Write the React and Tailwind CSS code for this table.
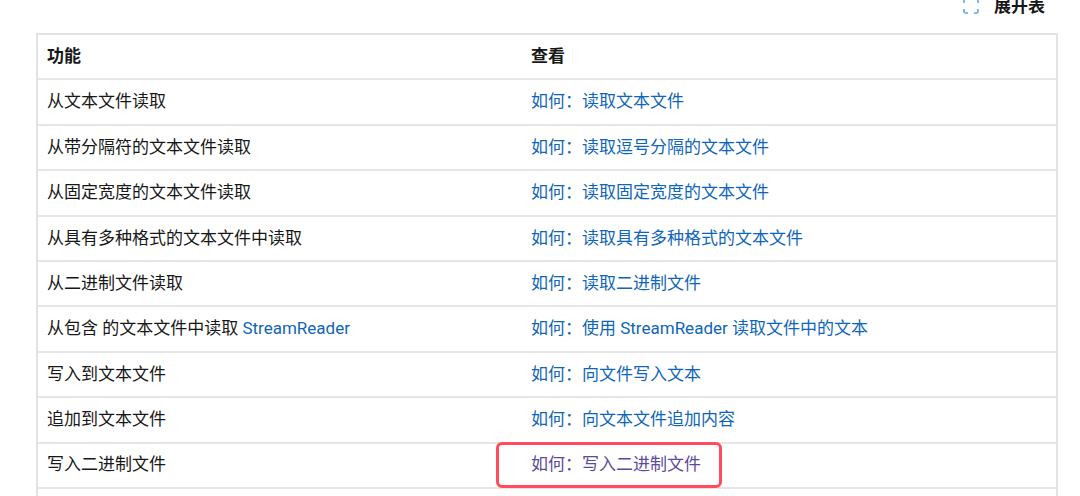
const rows = [
  { a: '从文本文件读取', b: '如何：读取文本文件' },
  { a: '从带分隔符的文本文件读取', b: '如何：读取逗号分隔的文本文件' },
  { a: '从固定宽度的文本文件读取', b: '如何：读取固定宽度的文本文件' },
  { a: '从具有多种格式的文本文件中读取', b: '如何：读取具有多种格式的文本文件' },
  { a: '从二进制文件读取', b: '如何：读取二进制文件' },
  { a: '从包含 的文本文件中读取', link: 'StreamReader', b: '如何：使用 StreamReader 读取文件中的文本' },
  { a: '写入到文本文件', b: '如何：向文件写入文本' },
  { a: '追加到文本文件', b: '如何：向文本文件追加内容' },
  { a: '写入二进制文件', b: '如何：写入二进制文件', visited: true },
  { a: '', b: '' },
];

function ExpandIcon() {
  return (
    <svg width="16" height="16" viewBox="0 0 16 16" fill="none" stroke="#6aa4dc" strokeWidth="1.6">
      <path d="M1 5V2.5A1.5 1.5 0 0 1 2.5 1H5" />
      <path d="M11 1h2.5A1.5 1.5 0 0 1 15 2.5V5" />
      <path d="M15 11v2.5a1.5 1.5 0 0 1-1.5 1.5H11" />
      <path d="M5 15H2.5A1.5 1.5 0 0 1 1 13.5V11" />
    </svg>
  );
}

export default function App() {
  return (
    <div
      className="relative w-[1080px] h-[496px] overflow-hidden bg-white text-[#171717] text-[17px]"
      style={{ fontFamily: 'Roboto, "Noto Sans CJK SC", sans-serif' }}
    >
      {/* top toolbar, partly cut off */}
      <div className="h-[33px] flex justify-end pr-[35px]">
        <div className="flex items-center gap-[15px] -mt-[6px] h-[24px]">
          <ExpandIcon />
          <span className="font-bold leading-[24px]">展开表</span>
        </div>
      </div>

      {/* table */}
      <div className="ml-[36px] w-[1022px] border-x-2 border-t-2 border-[#e3e3e3]">
        <div className="flex items-center h-[45.4px] border-b-2 border-[#e6e6e6] font-bold">
          <div className="w-[484px] pl-[9px]">功能</div>
          <div className="pl-[9px]">查看</div>
        </div>
        {rows.map((r, i) => (
          <div key={i} className="flex items-center h-[45.4px] border-b-2 border-[#e6e6e6]">
            <div className="w-[484px] pl-[9px]">
              {r.a}
              {r.link && <span className="text-[#0f65b8]"> {r.link}</span>}
            </div>
            <div className={`pl-[9px] ${r.visited ? 'text-[#5b4a9c]' : 'text-[#0f65b8]'}`}>{r.b}</div>
          </div>
        ))}
      </div>

      {/* highlight box */}
      <div className="absolute left-[496px] top-[442px] w-[226px] h-[46px] border-[3px] border-[#ff4b5c] rounded-[6px]" />
    </div>
  );
}
